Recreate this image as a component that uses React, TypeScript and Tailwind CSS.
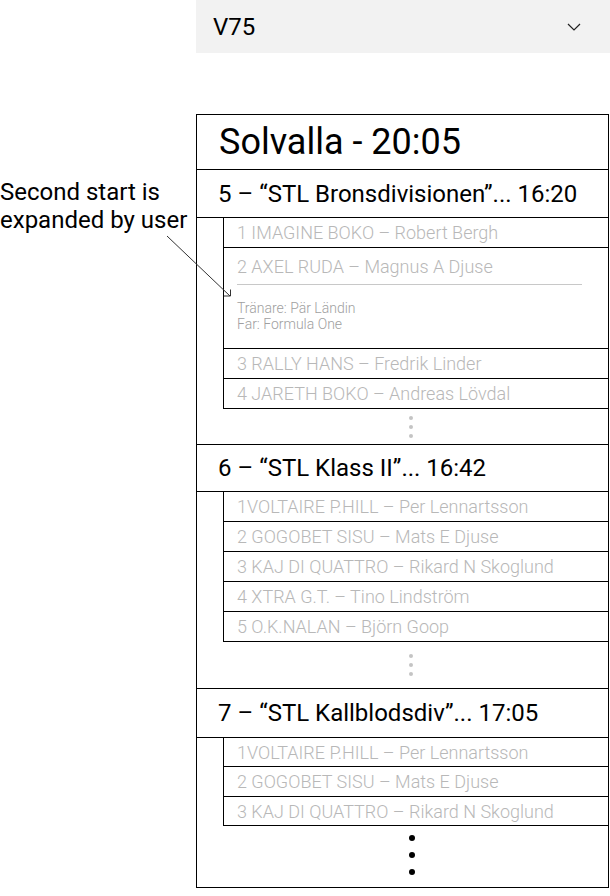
import * as React from 'react';

type Race = {
  title: string;
  headerH: string;
  rows: { text: string; h: string }[];
  dotsH: string;
  dark?: boolean;
  last?: boolean;
};

const races: Race[] = [
  {
    title: '5 – “STL Bronsdivisionen”... 16:20',
    headerH: 'h-[48px]',
    rows: [
      { text: '1 IMAGINE BOKO – Robert Bergh', h: 'h-[30px]' },
      { text: '2 AXEL RUDA – Magnus A Djuse', h: 'h-[101px]' },
      { text: '3 RALLY HANS – Fredrik Linder', h: 'h-[30px]' },
      { text: '4 JARETH BOKO – Andreas Lövdal', h: 'h-[30px]' },
    ],
    dotsH: 'h-[36px]',
  },
  {
    title: '6 – “STL Klass II”... 16:42',
    headerH: 'h-[47px]',
    rows: [
      { text: '1VOLTAIRE P.HILL – Per Lennartsson', h: 'h-[30px]' },
      { text: '2 GOGOBET SISU – Mats E Djuse', h: 'h-[30px]' },
      { text: '3 KAJ DI QUATTRO – Rikard N Skoglund', h: 'h-[30px]' },
      { text: '4 XTRA G.T. – Tino Lindström', h: 'h-[30px]' },
      { text: '5 O.K.NALAN – Björn Goop', h: 'h-[30px]' },
    ],
    dotsH: 'h-[47px]',
  },
  {
    title: '7 – “STL Kallblodsdiv”... 17:05',
    headerH: 'h-[49px]',
    rows: [
      { text: '1VOLTAIRE P.HILL – Per Lennartsson', h: 'h-[29px]' },
      { text: '2 GOGOBET SISU – Mats E Djuse', h: 'h-[30px]' },
      { text: '3 KAJ DI QUATTRO – Rikard N Skoglund', h: 'h-[29px]' },
    ],
    dotsH: 'h-[61px]',
    dark: true,
    last: true,
  },
];

const Dots = ({ dark }: { dark?: boolean }) =>
  dark ? (
    <div className="flex flex-col gap-[11px] -mt-[4px]">
      <span className="w-[6px] h-[6px] rounded-full bg-black" />
      <span className="w-[6px] h-[6px] rounded-full bg-black" />
      <span className="w-[6px] h-[6px] rounded-full bg-black" />
    </div>
  ) : (
    <div className="flex flex-col gap-[5px]">
      <span className="w-[4px] h-[4px] rounded-full bg-[#c4c4c4]" />
      <span className="w-[4px] h-[4px] rounded-full bg-[#c4c4c4]" />
      <span className="w-[4px] h-[4px] rounded-full bg-[#c4c4c4]" />
    </div>
  );

const HorseRow = ({ text, h, expanded }: { text: string; h: string; expanded: boolean }) => (
  <div className={`${h} border-b border-black pl-[13px] ${expanded ? 'pt-[4px]' : ''}`}>
    <div className="h-[29px] flex items-center text-[18px] font-light text-[#b8b8b8]">{text}</div>
    {expanded && (
      <>
        <div className="mt-[3px] mr-[26px] border-t border-[#c8c8c8]" />
        <div className="mt-[15px] text-[14px] leading-[16px] font-light text-[#a0a0a0]">
          <div>Tränare: Pär Ländin</div>
          <div>Far: Formula One</div>
        </div>
      </>
    )}
  </div>
);

export default function App() {
  return (
    <div className="relative w-[610px] h-[896px] bg-white text-black font-['Roboto',sans-serif]">
      <div className="ml-[196px] h-[53px] bg-[#f2f2f2] flex items-center justify-between pl-[17px] pr-[29px]">
        <span className="text-[24px]">V75</span>
        <svg width="14" height="8" viewBox="0 0 14 8" fill="none">
          <path d="M1 1l6 6 6-6" stroke="#222" strokeWidth="1.2" />
        </svg>
      </div>

      <div className="ml-[196px] mt-[61px] w-[413px] border border-black">
        <div className="h-[55px] border-b border-black flex items-center pl-[22px] text-[36px]">
          Solvalla - 20:05
        </div>
        {races.map((race) => (
          <div key={race.title}>
            <div className={`${race.headerH} border-b border-black flex items-center pl-[21px] text-[24px]`}>
              {race.title}
            </div>
            <div className="ml-[26px] border-l border-black">
              {race.rows.map((r, i) => (
                <HorseRow key={r.text} text={r.text} h={r.h} expanded={race.title.startsWith('5') && i === 1} />
              ))}
            </div>
            <div
              className={`${race.dotsH} ${race.last ? '' : 'border-b border-black'} flex items-center pl-[212px]`}
            >
              <Dots dark={race.dark} />
            </div>
          </div>
        ))}
      </div>

      <div className="absolute left-0 top-[178px] text-[24px] leading-[28px]">
        <div>Second start is</div>
        <div>expanded by user</div>
      </div>
      <svg className="absolute left-0 top-0" width="610" height="896" viewBox="0 0 610 896" fill="none">
        <path d="M167 236L230 296" stroke="#333" strokeWidth="1" />
        <path d="M224 296h6.5v-6.5" stroke="#333" strokeWidth="1" />
      </svg>
    </div>
  );
}
